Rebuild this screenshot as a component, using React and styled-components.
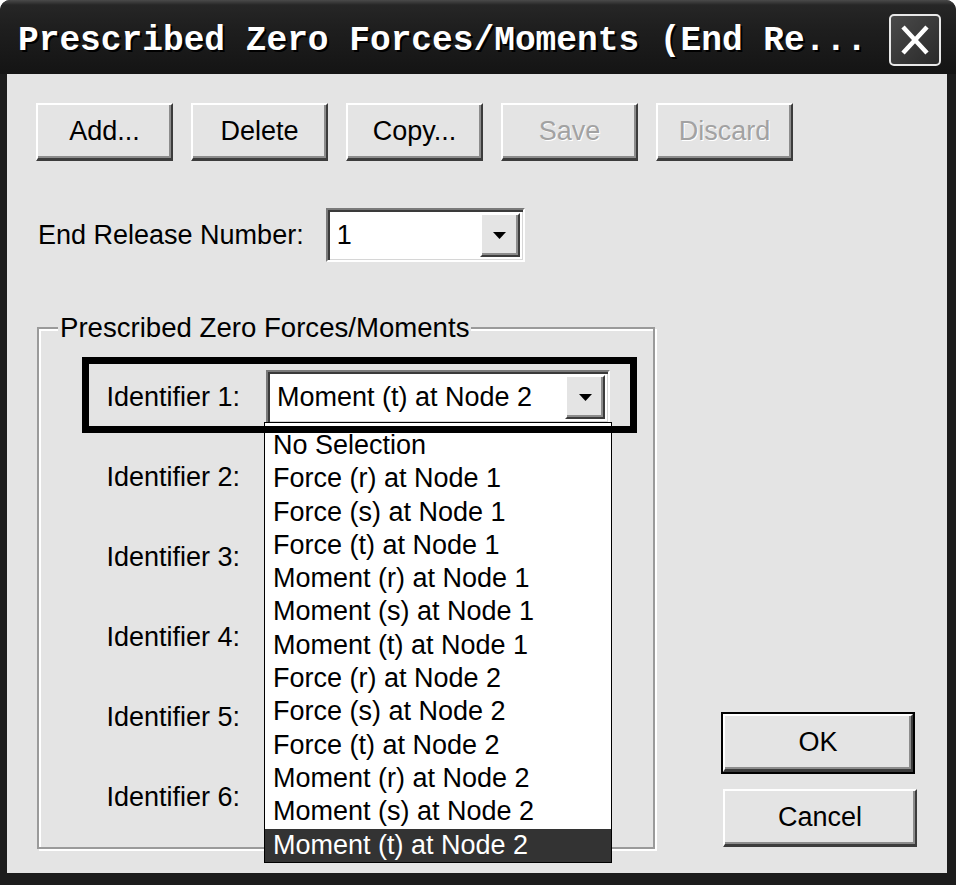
import React from 'react'
import styled, { createGlobalStyle } from 'styled-components'

const GlobalStyle = createGlobalStyle`
  html, body {
    margin: 0;
    padding: 0;
    background: #ffffff;
  }
  body {
    font-family: "Liberation Sans", Arial, sans-serif;
  }
`

const Window = styled.div`
  width: 956px;
  height: 885px;
  box-sizing: border-box;
  background: #1c1c1c;
  border-radius: 10px 10px 0 0;
  display: flex;
  flex-direction: column;
  overflow: hidden;
`

const TitleBar = styled.div`
  height: 74px;
  flex-shrink: 0;
  display: flex;
  align-items: center;
  justify-content: space-between;
  padding: 0 15px 0 18px;
  box-sizing: border-box;
  background: linear-gradient(#4a4a4a 0, #262626 5px, #1e1e1e 40%, #141414 100%);
`

const Title = styled.span`
  font-family: "Liberation Mono", "Courier New", monospace;
  font-weight: bold;
  font-size: 34.5px;
  color: #ffffff;
  text-shadow: 2px 2px 0 #000;
  white-space: nowrap;
  margin-top: 6px;
`

const CloseButton = styled.div`
  width: 52px;
  height: 52px;
  box-sizing: border-box;
  border: 2px solid #e8e8e8;
  border-radius: 5px;
  background: linear-gradient(135deg, #4a4a4a, #2a2a2a);
  display: flex;
  align-items: center;
  justify-content: center;
  margin-top: 6px;
`

const Client = styled.div`
  flex: 1;
  margin: 0 9px 12px 7px;
  background: #e4e4e4;
  padding: 29px 0 0 29px;
  box-sizing: border-box;
  display: flex;
  flex-direction: column;
  color: #000;
  font-size: 27px;
`

const ButtonRow = styled.div`
  display: flex;
  gap: 18px;
`

const Button = styled.div`
  width: ${(p) => p.width || 137}px;
  height: 58px;
  box-sizing: border-box;
  background: #e4e4e4;
  border-top: 2px solid #ffffff;
  border-left: 2px solid #ffffff;
  border-right: 2px solid #3c3c3c;
  border-bottom: 3px solid #3c3c3c;
  box-shadow: inset -2px -2px 0 #8c8c8c;
  display: flex;
  align-items: center;
  justify-content: center;
  color: ${(p) => (p.disabled ? '#a2a2a2' : '#000')};
  text-shadow: ${(p) => (p.disabled ? '1px 1px 0 #fff' : 'none')};
  outline: ${(p) => (p.isDefault ? '2px solid #000' : 'none')};
`

const FieldRow = styled.div`
  display: flex;
  align-items: center;
  gap: 22px;
  margin-top: 47px;
  padding-left: 2px;
`

const Combo = styled.div`
  position: relative;
  width: ${(p) => p.width}px;
  height: 54px;
  box-sizing: border-box;
  background: #ffffff;
  border-top: 2px solid #7a7a7a;
  border-left: 2px solid #7a7a7a;
  border-right: 2px solid #ffffff;
  border-bottom: 2px solid #ffffff;
  box-shadow: inset 2px 2px 0 #3a3a3a, inset -1px -1px 0 #d6d6d6;
  display: flex;
  align-items: center;
  justify-content: space-between;
  padding: 3px 3px 3px 9px;
`

const ComboValue = styled.span`
  white-space: nowrap;
`

const DropButton = styled.div`
  width: 40px;
  height: 100%;
  box-sizing: border-box;
  background: #e4e4e4;
  border-top: 2px solid #ffffff;
  border-left: 2px solid #ffffff;
  border-right: 2px solid #3c3c3c;
  border-bottom: 2px solid #3c3c3c;
  box-shadow: inset -2px -2px 0 #8c8c8c;
  display: flex;
  align-items: center;
  justify-content: center;
`

const BottomArea = styled.div`
  display: flex;
  align-items: flex-end;
  margin-top: 51px;
`

const Group = styled.fieldset`
  width: 618px;
  margin: 0 0 0 1px;
  padding: 27px 0 23px 41px;
  box-sizing: border-box;
  border: 2px solid #9a9a9a;
  box-shadow: inset 2px 2px 0 #ffffff, 2px 2px 0 #ffffff;
  display: flex;
  flex-direction: column;
  gap: 26px;
`

const Legend = styled.legend`
  margin-left: -22px;
  padding: 0 2px;
  line-height: 30px;
  font-size: 27.6px;
  background: #e4e4e4;
`

const IdRow = styled.div`
  position: relative;
  display: flex;
  align-items: center;
  gap: 26px;
  width: max-content;

  ${(p) =>
    p.marked &&
    `
    &::after {
      content: '';
      position: absolute;
      left: 2px;
      right: -27px;
      top: -13px;
      bottom: -9px;
      border: 7px solid #000;
      z-index: 3;
      pointer-events: none;
    }
  `}
`

const IdLabel = styled.span`
  width: 160px;
  text-align: right;
  white-space: nowrap;
`

const DropList = styled.div`
  position: absolute;
  top: 100%;
  left: -4px;
  width: 348px;
  box-sizing: border-box;
  padding-top: 6px;
  background: #ffffff;
  border: 1px solid #000;
  z-index: 2;
`

const ListItem = styled.div`
  height: 33.3px;
  line-height: 33.3px;
  padding-left: 8px;
  white-space: nowrap;
  background: ${(p) => (p.selected ? '#333333' : 'transparent')};
  color: ${(p) => (p.selected ? '#ffffff' : '#000')};
`

const SideButtons = styled.div`
  display: flex;
  flex-direction: column;
  gap: 17px;
  margin: 0 0 2px 68px;
`

const Arrow = () => (
  <svg width="13" height="7" viewBox="0 0 13 7">
    <polygon points="0,0 13,0 6.5,7" fill="#000" />
  </svg>
)

const CloseIcon = () => (
  <svg width="30" height="30" viewBox="0 0 30 30">
    <path d="M3 2 L27 28 M27 2 L3 28" stroke="#ffffff" strokeWidth="4.5" />
  </svg>
)

const options = [
  'No Selection',
  'Force (r) at Node 1',
  'Force (s) at Node 1',
  'Force (t) at Node 1',
  'Moment (r) at Node 1',
  'Moment (s) at Node 1',
  'Moment (t) at Node 1',
  'Force (r) at Node 2',
  'Force (s) at Node 2',
  'Force (t) at Node 2',
  'Moment (r) at Node 2',
  'Moment (s) at Node 2',
  'Moment (t) at Node 2',
]

export default function App() {
  const selected = 'Moment (t) at Node 2'
  return (
    <>
      <GlobalStyle />
      <Window>
        <TitleBar>
          <Title>Prescribed Zero Forces/Moments (End Re...</Title>
          <CloseButton>
            <CloseIcon />
          </CloseButton>
        </TitleBar>
        <Client>
          <ButtonRow>
            <Button>Add...</Button>
            <Button>Delete</Button>
            <Button>Copy...</Button>
            <Button disabled>Save</Button>
            <Button disabled>Discard</Button>
          </ButtonRow>

          <FieldRow>
            <span>End Release Number:</span>
            <Combo width={199}>
              <ComboValue>1</ComboValue>
              <DropButton>
                <Arrow />
              </DropButton>
            </Combo>
          </FieldRow>

          <BottomArea>
            <Group>
              <Legend>Prescribed Zero Forces/Moments</Legend>
              {[1, 2, 3, 4, 5, 6].map((n) => (
                <IdRow key={n} marked={n === 1}>
                  <IdLabel>Identifier {n}:</IdLabel>
                  <Combo width={344}>
                    <ComboValue>{n === 1 ? selected : ''}</ComboValue>
                    <DropButton>
                      <Arrow />
                    </DropButton>
                    {n === 1 && (
                      <DropList>
                        {options.map((o) => (
                          <ListItem key={o} selected={o === selected}>
                            {o}
                          </ListItem>
                        ))}
                      </DropList>
                    )}
                  </Combo>
                </IdRow>
              ))}
            </Group>
            <SideButtons>
              <Button width={190} isDefault>OK</Button>
              <Button width={194}>Cancel</Button>
            </SideButtons>
          </BottomArea>
        </Client>
      </Window>
    </>
  )
}
